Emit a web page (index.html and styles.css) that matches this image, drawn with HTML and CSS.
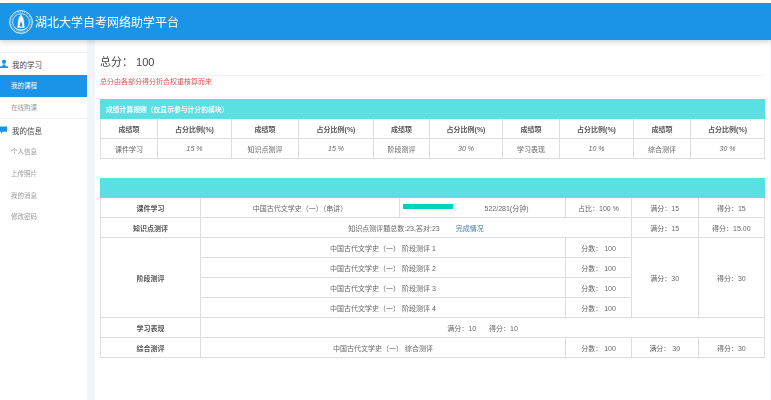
FILE: index.html
```html
<!DOCTYPE html>
<html>
<head>
	<meta charset="utf-8">
	<title>湖北大学自考网络助学平台</title>
	<link rel="stylesheet" href="styles.css">
</head>
<body>
<div class="header">
	<svg class="logo" viewBox="0 0 24 24" width="24" height="24" fill="none" stroke="#fff">
		<circle cx="12" cy="12" r="11.4" stroke-width="0.9"/>
		<circle cx="12" cy="12" r="8.4" stroke-width="0.7"/>
		<circle cx="12" cy="12" r="10" stroke-width="1" stroke-dasharray="1 1" opacity="0.6"/>
		<path d="M12 4.5L9.8 8.5 8.6 17.5H15.4L14.2 8.5Z" fill="#fff" stroke-width="0.5"/>
		<path d="M12 10.5L10.4 16.5H13.6Z" fill="#1a94e6" stroke="none"/>
		<path d="M6 17.5C7 19 9 20 12 20S17 19 18 17.5" stroke-width="0.8"/>
	</svg>
	<h1>湖北大学自考网络助学平台</h1>
</div>
<div class="wrap">
	<div class="side">
		<div class="group">
			<div class="head">
				<svg class="ico" viewBox="0 0 9 10" width="8" height="10" fill="#1a94e6"><circle cx="4.5" cy="2.6" r="2.4"/><path d="M3 5.5H6L6.5 7.5H9V9.5H0V7.5H2.5Z"/></svg>
				我的学习
			</div>
			<a class="item on">我的课程</a>
			<a class="item">在线购课</a>
		</div>
		<div class="group">
			<div class="head">
				<svg class="ico" viewBox="0 0 9 10" width="8" height="10" fill="#1a94e6"><path d="M0 1H8V7H3L1 9.5V7H0Z"/></svg>
				我的信息
			</div>
			<a class="item">个人信息</a>
			<a class="item">上传照片</a>
			<a class="item">我的消息</a>
			<a class="item">修改密码</a>
		</div>
	</div>
	<div class="main">
		<div class="total">总分： 100</div>
		<div class="note">总分由各部分得分折合权重核算而来</div>

		<table class="rules">
			<colgroup>
				<col class="r1"><col class="r2"><col class="r3"><col class="r4"><col class="r5">
				<col class="r6"><col class="r1"><col class="r2"><col class="r1"><col class="r2">
			</colgroup>
			<tr><th colspan="10" class="bar left">成绩计算规则（仅显示参与计分的模块）</th></tr>
			<tr>
				<th>成绩项</th><th>占分比例(%)</th>
				<th>成绩项</th><th>占分比例(%)</th>
				<th>成绩项</th><th>占分比例(%)</th>
				<th>成绩项</th><th>占分比例(%)</th>
				<th>成绩项</th><th>占分比例(%)</th>
			</tr>
			<tr>
				<td>课件学习</td><td><i>15 %</i></td>
				<td>知识点测评</td><td><i>15 %</i></td>
				<td>阶段测评</td><td><i>30 %</i></td>
				<td>学习表现</td><td><i>10 %</i></td>
				<td>综合测评</td><td><i>30 %</i></td>
			</tr>
		</table>

		<table class="scores">
			<colgroup>
				<col class="c1"><col class="c2"><col class="c3"><col class="c4"><col class="c5"><col class="c5">
			</colgroup>
			<tr><th colspan="6" class="bar">&nbsp;</th></tr>
			<tr>
				<th>课件学习</th>
				<td>中国古代文学史（一）（串讲）</td>
				<td class="prog"><span class="track"><span class="fill"></span></span><span class="mins">522/281(分钟)</span></td>
				<td>占比：100 %</td>
				<td>满分：15</td>
				<td>得分：15</td>
			</tr>
			<tr>
				<th>知识点测评</th>
				<td colspan="3">知识点测评题总数:23,答对:23<a class="link">完成情况</a></td>
				<td>满分：15</td>
				<td>得分：15.00</td>
			</tr>
			<tr>
				<th rowspan="4">阶段测评</th>
				<td colspan="2">中国古代文学史（一）&nbsp;阶段测评 1</td>
				<td>分数：&nbsp;100</td>
				<td rowspan="4">满分：30</td>
				<td rowspan="4">得分：30</td>
			</tr>
			<tr><td colspan="2">中国古代文学史（一）&nbsp;阶段测评 2</td><td>分数：&nbsp;100</td></tr>
			<tr><td colspan="2">中国古代文学史（一）&nbsp;阶段测评 3</td><td>分数：&nbsp;100</td></tr>
			<tr><td colspan="2">中国古代文学史（一）&nbsp;阶段测评 4</td><td>分数：&nbsp;100</td></tr>
			<tr>
				<th>学习表现</th>
				<td colspan="5">满分：10<span class="gap">得分：10</span></td>
			</tr>
			<tr>
				<th>综合测评</th>
				<td colspan="2">中国古代文学史（一）&nbsp;综合测评</td>
				<td>分数：&nbsp;100</td>
				<td>满分：&nbsp;30</td>
				<td>得分：30</td>
			</tr>
		</table>
	</div>
</div>
</body>
</html>
```

FILE: styles.css
```css
html, body {
	margin: 0;
	height: 400px;
	overflow: hidden;
}
body {
	background: #fff;
	font-family: "Liberation Sans", "Noto Sans CJK SC", sans-serif;
	font-size: 7px;
	color: #666;
	padding-top: 3px;
	box-sizing: border-box;
	filter: blur(0.3px);
}
.header {
	display: flex;
	align-items: center;
	height: 37px;
	padding-left: 9px;
	background: #1a94e6;
	box-shadow: 0 2px 5px rgba(0,0,0,0.18);
	position: relative;
}
.header h1 {
	margin: 0 0 0 2px;
	font-size: 12px;
	font-weight: normal;
	color: #fff;
}
.wrap {
	display: flex;
	height: 360px;
	background: #f0f5fa;
}
.side {
	width: 87px;
	padding-top: 12px;
	flex: none;
	background: #fff;
}
.group {
	border-top: 1px solid #edf1f5;
}
.head {
	display: flex;
	align-items: center;
	gap: 4px;
	height: 22px;
	font-size: 7.5px;
	color: #444;
}
.item {
	display: block;
	height: 21.7px;
	line-height: 21.7px;
	padding-left: 11px;
	font-size: 6.5px;
	color: #999;
}
.item.on {
	background: #1a94e6;
	color: #fff;
}
.main {
	flex: 1;
	background: #fff;
	margin: 0 1px 0 8px;
	padding: 0 5px;
}
.total {
	margin-top: 12px;
	height: 23px;
	line-height: 20px;
	font-size: 11px;
	color: #444;
	border-bottom: 1px solid #f2f2f2;
}
.note {
	line-height: 12px;
	color: #d9534f;
}
table {
	width: 664px;
	table-layout: fixed;
	border-collapse: collapse;
	background: #fff;
}
th, td {
	height: 19px;
	padding: 0;
	border: 1px solid #ddd;
	text-align: center;
	font-weight: normal;
}
th {
	font-weight: bold;
	color: #555;
}
th.bar {
	height: 18px;
	background: #5adfe3;
	border-color: #5adfe3;
	color: #fff;
	font-size: 6.8px;
}
.left {
	text-align: left;
	padding-left: 5px;
}
.rules {
	margin-top: 11px;
}
.r1 { width: 57px; }
.r2 { width: 74px; }
.r3 { width: 67px; }
.r4 { width: 75px; }
.r5 { width: 56px; }
.r6 { width: 73px; }
.scores {
	margin-top: 19px;
}
.c1 { width: 100px; }
.c2 { width: 199px; }
.c3 { width: 166px; }
.c4 { width: 66px; }
.c5 { width: 66.5px; }
.prog {
	position: relative;
}
.track {
	position: absolute;
	left: 3px;
	top: 6px;
	width: 50px;
	height: 5px;
}
.fill {
	display: block;
	height: 100%;
	background: #00d0c0;
}
.mins {
	padding-left: 48px;
}
.link {
	margin-left: 16px;
	color: #3a7ca8;
}
.gap {
	margin-left: 13px;
}
```
